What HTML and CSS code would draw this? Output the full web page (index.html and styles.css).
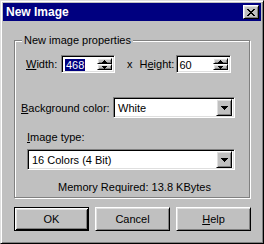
FILE: index.html
```html
<!DOCTYPE html>
<html lang="en">
<head>
  <meta charset="UTF-8">
  <meta name="viewport" content="width=device-width, initial-scale=1.0">
  <title>New Image</title>
  <link rel="stylesheet" href="styles.css">
</head>
<body>
  <div class="dialog">
    <div class="titlebar">
      <span class="title">New Image</span>
      <button class="close raised">
        <svg width="8" height="7" viewBox="0 0 8 7"><path d="M0 0h2v1h1v1h2v-1h1v-1h2v1h-1v1h-1v1h-1v1h1v1h1v1h1v1h-2v-1h-1v-1h-2v1h-1v1h-2v-1h1v-1h1v-1h1v-1h-1v-1h-1v-1h-1z"/></svg>
      </button>
    </div>

    <div class="content">
      <fieldset class="group">
        <legend>New image properties</legend>

        <div class="size-row">
          <label class="lbl-width"><u>W</u>idth:</label>
          <div class="spin sunken">
            <span class="value"><span class="selected">468</span></span>
            <div class="spin-btns">
              <span class="raised"><svg width="5" height="3" viewBox="0 0 5 3"><path d="M2 0h1v1h1v1h1v1h-5v-1h1v-1h1z"/></svg></span>
              <span class="raised"><svg width="5" height="3" viewBox="0 0 5 3"><path d="M0 0h5v1h-1v1h-1v1h-1v-1h-1v-1h-1z"/></svg></span>
            </div>
          </div>
          <span class="times">x</span>
          <label class="lbl-height">H<u>e</u>ight:</label>
          <div class="spin sunken wide">
            <span class="value">60</span>
            <div class="spin-btns">
              <span class="raised"><svg width="5" height="3" viewBox="0 0 5 3"><path d="M2 0h1v1h1v1h1v1h-5v-1h1v-1h1z"/></svg></span>
              <span class="raised"><svg width="5" height="3" viewBox="0 0 5 3"><path d="M0 0h5v1h-1v1h-1v1h-1v-1h-1v-1h-1z"/></svg></span>
            </div>
          </div>
        </div>

        <div class="bg-row">
          <label class="lbl-bg"><u>B</u>ackground color:</label>
          <div class="combo sunken short">
            <span class="value">White</span>
            <span class="drop raised"><svg width="7" height="4" viewBox="0 0 7 4"><path d="M0 0h7v1h-1v1h-1v1h-1v1h-1v-1h-1v-1h-1v-1h-1z"/></svg></span>
          </div>
        </div>

        <label class="lbl-type"><u>I</u>mage type:</label>
        <div class="combo sunken long">
          <span class="value">16 Colors (4 Bit)</span>
          <span class="drop raised"><svg width="7" height="4" viewBox="0 0 7 4"><path d="M0 0h7v1h-1v1h-1v1h-1v1h-1v-1h-1v-1h-1v-1h-1z"/></svg></span>
        </div>

        <p class="memory">Memory Required: 13.8 KBytes</p>
      </fieldset>

      <div class="buttons">
        <button class="btn default">OK</button>
        <button class="btn">Cancel</button>
        <button class="btn"><u>H</u>elp</button>
      </div>
    </div>
  </div>
</body>
</html>
```

FILE: styles.css
```css
body {
  margin: 0;
  font-family: "Liberation Sans", Arial, sans-serif;
  font-size: 11px;
  color: #000;
}
.dialog {
  box-sizing: border-box;
  width: 264px;
  height: 244px;
  padding: 2px;
  background: #c0c0c0;
  border: 1px solid;
  border-color: #dfdfdf #000 #000 #dfdfdf;
  box-shadow: inset 1px 1px #fff, inset -1px -1px #808080;
}
.titlebar {
  height: 18px;
  padding-left: 3px;
  display: flex;
  align-items: center;
  justify-content: space-between;
  background: #000080;
  color: #fff;
}
.title {
  font-size: 12px;
  font-weight: bold;
}
.raised {
  box-sizing: border-box;
  background: #c0c0c0;
  border: 1px solid;
  border-color: #fff #000 #000 #fff;
  box-shadow: inset 1px 1px #dfdfdf, inset -1px -1px #808080;
}
.sunken {
  box-sizing: border-box;
  background: #fff;
  border: 1px solid;
  border-color: #808080 #fff #fff #808080;
  box-shadow: inset 1px 1px #000, inset -1px -1px #dfdfdf;
}
.close {
  width: 16px;
  height: 14px;
  margin-right: 2px;
  padding: 0;
  display: flex;
  align-items: center;
  justify-content: center;
}
.content {
  padding: 13px 0 0 11px;
}
.group {
  box-sizing: border-box;
  width: 236px;
  margin: 0;
  padding: 0 0 3px 0;
  border: 1px solid #808080;
  box-shadow: 1px 1px #fff, inset 1px 1px #fff;
}
.group legend {
  margin-left: 7px;
  padding: 0 2px;
  line-height: 13px;
  background: #c0c0c0;
}
.size-row {
  display: flex;
  align-items: center;
  height: 18px;
  margin-top: 8px;
}
.lbl-width {
  width: 35px;
  margin-left: 11px;
}
.spin {
  display: flex;
  width: 54px;
  height: 18px;
  padding: 2px;
}
.spin.wide {
  width: 55px;
}
.value {
  flex: 1;
  padding-left: 1px;
  line-height: 14px;
  white-space: nowrap;
}
.selected {
  background: #000080;
  color: #fff;
  padding: 0 1px;
}
.spin-btns {
  width: 15px;
  display: flex;
  flex-direction: column;
}
.spin-btns span {
  flex: 1;
  display: flex;
  align-items: center;
  justify-content: center;
}
.spin-btns svg,
.drop svg,
.close svg {
  display: block;
}
.times {
  margin-left: 12px;
}
.lbl-height {
  width: 36px;
  margin-left: 7px;
}
.bg-row {
  display: flex;
  align-items: center;
  margin-top: 24px;
}
.lbl-bg {
  width: 92px;
  margin-left: 6px;
}
.combo {
  display: flex;
  align-items: center;
  height: 21px;
  padding: 2px;
}
.combo .value {
  padding-left: 2px;
}
.combo.short {
  width: 122px;
}
.combo.long {
  width: 208px;
  margin: 5px 0 0 12px;
}
.drop {
  width: 16px;
  height: 17px;
  display: flex;
  align-items: center;
  justify-content: center;
}
.lbl-type {
  display: block;
  margin: 13px 0 0 12px;
  line-height: 13px;
}
.memory {
  margin: 11px 0 0 0;
  padding-left: 5px;
  line-height: 13px;
  text-align: center;
}
.buttons {
  display: flex;
  gap: 6px;
  margin-top: 9px;
}
.btn {
  box-sizing: border-box;
  width: 75px;
  height: 24px;
  padding: 0;
  font: inherit;
  color: #000;
  background: #c0c0c0;
  border: 1px solid;
  border-color: #fff #000 #000 #fff;
  box-shadow: inset 1px 1px #dfdfdf, inset -1px -1px #808080;
}
.btn.default {
  border-color: #000;
  box-shadow: inset 1px 1px #fff, inset -1px -1px #000, inset 2px 2px #dfdfdf, inset -2px -2px #808080;
}
```
